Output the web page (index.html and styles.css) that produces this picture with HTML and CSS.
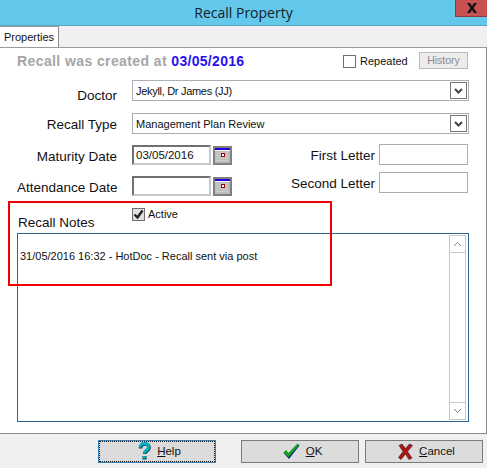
FILE: index.html
```html
<!DOCTYPE html>
<html lang="en">
<head>
    <meta charset="UTF-8">
    <title>Recall Property</title>
    <link rel="stylesheet" href="styles.css">
</head>
<body>
    <div class="window">
        <div class="titlebar">
            <span class="title">Recall Property</span>
            <div class="close-button">
                <svg width="12" height="10" viewBox="0 0 12 10"><path d="M1 0h3l2 3 2-3h3L7.500 5 11 10H8L6 7l-2 3H1l3.500-5z" fill="#111"/></svg>
            </div>
        </div>

        <div class="tabs">
            <div class="tab">Properties</div>
        </div>

        <div class="panel">
            <div class="created-row">
                <div class="created-text">Recall was created at <span class="created-date">03/05/2016</span></div>
                <div class="repeated">
                    <span class="checkbox"></span>
                    <span>Repeated</span>
                </div>
                <div class="history-button">History</div>
            </div>

            <div class="field-row doctor-row">
                <label class="field-label">Doctor</label>
                <div class="combo">
                    <span class="doctor-name">Jekyll, Dr James (JJ)</span>
                    <span class="combo-arrow"><svg width="9" height="6" viewBox="0 0 9 6"><path d="M1 1l3.500 3.500L8 1" fill="none" stroke="#444" stroke-width="2"/></svg></span>
                </div>
            </div>

            <div class="field-row type-row">
                <label class="field-label">Recall Type</label>
                <div class="combo">
                    <span>Management Plan Review</span>
                    <span class="combo-arrow"><svg width="9" height="6" viewBox="0 0 9 6"><path d="M1 1l3.500 3.500L8 1" fill="none" stroke="#444" stroke-width="2"/></svg></span>
                </div>
            </div>

            <div class="dates">
                <div class="dates-left">
                    <div class="field-row">
                        <label class="field-label">Maturity Date</label>
                        <div class="date-input">03/05/2016</div>
                        <div class="calendar-button">
                            <svg width="15" height="15" viewBox="0 0 15 15"><rect width="15" height="15" fill="#bdbdbd"/><rect width="15" height="2" fill="#2200e0"/><rect y="2" width="15" height="1" fill="#f4f4f4"/><path d="M1.500 5h12M1.500 7.500h12M1.500 10h12M1.500 12.500h12" stroke="#e2e2e2" stroke-width="1" stroke-dasharray="1 1"/><rect x="6" y="5" width="4" height="4" fill="#a00000"/><rect x="7" y="6" width="2" height="2" fill="#fff"/></svg>
                        </div>
                    </div>
                    <div class="field-row attendance-row">
                        <label class="field-label">Attendance Date</label>
                        <div class="date-input"></div>
                        <div class="calendar-button">
                            <svg width="15" height="15" viewBox="0 0 15 15"><rect width="15" height="15" fill="#bdbdbd"/><rect width="15" height="2" fill="#2200e0"/><rect y="2" width="15" height="1" fill="#f4f4f4"/><path d="M1.500 5h12M1.500 7.500h12M1.500 10h12M1.500 12.500h12" stroke="#e2e2e2" stroke-width="1" stroke-dasharray="1 1"/><rect x="6" y="5" width="4" height="4" fill="#a00000"/><rect x="7" y="6" width="2" height="2" fill="#fff"/></svg>
                        </div>
                    </div>
                </div>
                <div class="dates-right">
                    <div class="letter-row">
                        <label>First Letter</label>
                        <div class="letter-input"></div>
                    </div>
                    <div class="letter-row second-letter">
                        <label>Second Letter</label>
                        <div class="letter-input"></div>
                    </div>
                </div>
            </div>

            <div class="active-row">
                <span class="checkbox checked">
                    <svg width="11" height="11" viewBox="0 0 11 11"><path d="M1.500 5.500l3 3 5-7" fill="none" stroke="#222" stroke-width="2.400"/></svg>
                </span>
                <span>Active</span>
            </div>

            <div class="notes-label">Recall Notes</div>
            <div class="notes">
                <div class="notes-text">31/05/2016 16:32 - HotDoc - Recall sent via post</div>
                <div class="scrollbar">
                    <div class="scroll-button"><svg width="9" height="6" viewBox="0 0 9 6"><path d="M1 5l3.500-3.500L8 5" fill="none" stroke="#888" stroke-width="1"/></svg></div>
                    <div class="scroll-track"></div>
                    <div class="scroll-button"><svg width="9" height="6" viewBox="0 0 9 6"><path d="M1 1l3.500 3.500L8 1" fill="none" stroke="#888" stroke-width="1"/></svg></div>
                </div>
            </div>
        </div>

        <div class="footer">
            <div class="button help-button">
                <svg width="13" height="18" viewBox="0 0 13 18"><path d="M2.500 6.500C2.500 3.500 4.500 2 7 2s4 1.500 4 3.500c0 2-1.500 3-3 4-.8.600-1.200 1.200-1.200 2.500" fill="none" stroke="#0d3f55" stroke-width="3.600"/><path d="M2 5.500C2 3 4 1.500 6.500 1.500S10.500 3 10.500 5c0 2-1.500 3-3 4-.8.600-1.200 1.200-1.200 2.500" fill="none" stroke="#00b4c4" stroke-width="2.800"/><rect x="4.500" y="14" width="4" height="3.500" fill="#0d3f55"/><rect x="4.500" y="14" width="3" height="2.500" fill="#00b4c4"/></svg>
                <span class="button-text"><u>H</u>elp</span>
            </div>
            <div class="button ok-button">
                <svg width="17" height="17" viewBox="0 0 17 17"><path d="M0.500 10l2.500-2.500 2.500 3L14.500 1 16.500 2.500 6 16z" fill="#0a2a80"/><path d="M0.500 9.500l2.500-2.500 2.500 2.800L14.500 0.500 16 2 5.500 14z" fill="#14a818"/></svg>
                <span class="button-text"><u>O</u>K</span>
            </div>
            <div class="button cancel-button">
                <svg width="15" height="17" viewBox="0 0 15 17"><path d="M1 2.500l3-1.500 3.500 4.500L11.500 1l3 1.500L9.500 8.500 14 15l-3 1.500-3.500-5.500L3 16.500 0.500 14.500l4.500-6z" fill="#a81818" stroke="#4a1010" stroke-width=".6"/></svg>
                <span class="button-text"><u>C</u>ancel</span>
            </div>
        </div>

        <div class="annotation"></div>
    </div>
</body>
</html>
```

FILE: styles.css
```css
body {
    margin: 0;
    font-family: 'Liberation Sans', Arial, sans-serif;
    font-size: 11px;
    color: #111;
    background-color: #f0f0f0;
}

.window {
    position: relative;
    width: 487px;
    height: 468px;
    overflow: hidden;
}

.titlebar {
    position: relative;
    height: 25px;
    background-color: #63c8ea;
    border-bottom: 1px solid #5ba6c4;
    display: flex;
    align-items: center;
    justify-content: center;
}

.title {
    font-family: 'Open Sans', sans-serif;
    font-size: 14px;
    color: #10202a;
}

.close-button {
    position: absolute;
    top: 0;
    right: 0;
    width: 31px;
    height: 16px;
    background-color: #c75050;
    border: 1px solid #8f3b3b;
    border-top: none;
    border-right: none;
    display: flex;
    align-items: center;
    justify-content: center;
}

.tabs {
    height: 21px;
    background-color: #f0f0f0;
    display: flex;
}

.tab {
    width: 59px;
    height: 21px;
    box-sizing: border-box;
    background-color: #fff;
    border-top: 1px solid #9a9a9a;
    border-right: 1px solid #8a8a8a;
    text-align: center;
    font-size: 11px;
    line-height: 20px;
}

.panel {
    height: 387px;
    box-sizing: border-box;
    background-color: #fff;
    border-top: 1px solid #9a9a9a;
    border-right: 1px solid #8a8a8a;
    border-bottom: 1px solid #8a8a8a;
    padding: 4px 17px 0 17px;
}

.created-row {
    display: flex;
    align-items: center;
    height: 18px;
}

.created-text {
    font-size: 14px;
    font-weight: bold;
    color: #a6a6a6;
    letter-spacing: 0.4px;
    width: 326px;
    white-space: nowrap;
}

.created-date {
    color: #2a10f0;
    letter-spacing: 0.3px;
}

.repeated {
    display: flex;
    align-items: center;
    gap: 4px;
    width: 76px;
}

.checkbox {
    width: 11px;
    height: 11px;
    border: 1px solid #707070;
    background-color: #fff;
    display: inline-flex;
    flex-shrink: 0;
}

.checkbox.checked {
    background-color: #e0e0e0;
}

.history-button {
    width: 47px;
    height: 15px;
    margin-top: -2px;
    border: 1px solid #b8bcbc;
    background-color: #ececec;
    color: #8a8a8a;
    text-align: center;
    line-height: 15px;
    font-size: 10.500px;
}

.field-row {
    display: flex;
    align-items: flex-start;
}

.field-label {
    width: 100px;
    margin-right: 15px;
    padding-top: 4px;
    text-align: right;
    font-size: 13.500px;
    line-height: 15px;
    white-space: nowrap;
    flex-shrink: 0;
}

.doctor-row {
    margin-top: 10px;
}

.doctor-row .field-label {
    padding-top: 8px;
}

.type-row {
    margin-top: 10px;
}

.combo {
    flex: 1;
    height: 21px;
    box-sizing: border-box;
    border: 1px solid #a9afb5;
    background-color: #fff;
    display: flex;
    align-items: center;
    justify-content: space-between;
    padding: 0 1px 0 3px;
    font-size: 11px;
}

.doctor-name {
    letter-spacing: -0.3px;
}

.combo-arrow {
    width: 15px;
    height: 15px;
    border: 1px solid #777;
    display: flex;
    align-items: center;
    justify-content: center;
}

.dates {
    display: flex;
    justify-content: space-between;
    margin-top: 11px;
}

.date-input {
    width: 79px;
    height: 20px;
    box-sizing: border-box;
    border: 2px solid #c8c8c8;
    border-top-color: #707070;
    border-left-color: #707070;
    background-color: #fff;
    padding-left: 2px;
    line-height: 17px;
    font-size: 11.500px;
}

.calendar-button {
    width: 19px;
    height: 19px;
    box-sizing: border-box;
    margin: 1px 0 0 2px;
    background-color: #d8d8d8;
    border: 2px solid #808080;
    display: flex;
    align-items: center;
    justify-content: center;
}

.attendance-row {
    margin-top: 11px;
}

.dates-right {
    display: flex;
    flex-direction: column;
    margin-top: -1px;
    padding-right: 1px;
}

.letter-row {
    display: flex;
    align-items: flex-start;
    justify-content: flex-end;
    gap: 4px;
    font-size: 13.500px;
}

.letter-row label {
    padding-top: 4px;
    line-height: 15px;
}

.second-letter {
    margin-top: 7px;
}

.letter-input {
    width: 87px;
    height: 19px;
    border: 1px solid #a9afb5;
    background-color: #fff;
}

.active-row {
    display: flex;
    align-items: center;
    gap: 3px;
    margin-top: 11px;
    margin-left: 115px;
    height: 14px;
}

.notes-label {
    font-size: 13.500px;
    margin: -6px 0 2px 1px;
    height: 16px;
    line-height: 16px;
}

.notes {
    height: 189px;
    box-sizing: border-box;
    border: 1px solid #2a6496;
    display: flex;
    justify-content: space-between;
    padding: 1px;
}

.notes-text {
    padding: 15px 0 0 1px;
    font-size: 11px;
}

.scrollbar {
    width: 17px;
    box-sizing: border-box;
    border: 1px solid #c8c8c8;
    display: flex;
    flex-direction: column;
    margin-right: 1px;
}

.scroll-button {
    height: 16px;
    display: flex;
    align-items: center;
    justify-content: center;
    flex-shrink: 0;
}

.scroll-track {
    flex: 1;
    border-top: 1px solid #c8c8c8;
    border-bottom: 1px solid #c8c8c8;
    background-color: #fff;
}

.footer {
    height: 34px;
    display: flex;
    align-items: center;
    padding-left: 98px;
    background-color: #f0f0f0;
}

.button {
    width: 118px;
    height: 23px;
    box-sizing: border-box;
    background-color: #dcdcdc;
    border: 1px solid #7a7a7a;
    display: flex;
    align-items: center;
    justify-content: center;
    gap: 6px;
    padding-left: 5px;
}

.button-text {
    font-size: 11.500px;
}

.help-button {
    border: 1px solid #3a80b5;
    outline: 1px dotted #111;
    outline-offset: -2px;
    margin-right: 25px;
}

.ok-button {
    margin-right: 6px;
}

.annotation {
    position: absolute;
    left: 8px;
    top: 201px;
    width: 320px;
    height: 81px;
    border: 2px solid #f00000;
}
```
